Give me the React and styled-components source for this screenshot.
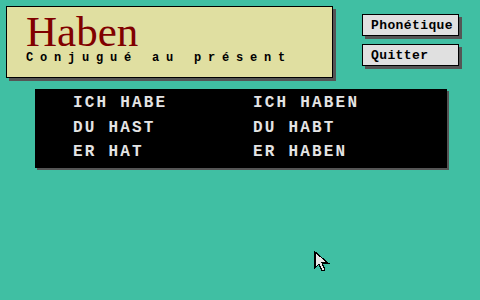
import React from 'react';
import styled, { createGlobalStyle } from 'styled-components';

const teal = '#40bfa3';
const shadow = '#555555';

const Global = createGlobalStyle`
  html, body {
    margin: 0;
    padding: 0;
    background: ${teal};
  }
  body {
    width: 480px;
    height: 300px;
    overflow: hidden;
  }
`;

const Screen = styled.div`
  position: relative;
  width: 480px;
  height: 300px;
  padding: 6px 0 0 6px;
  box-sizing: border-box;
`;

const TopRow = styled.div`
  display: flex;
  align-items: flex-start;
`;

const TitleCard = styled.div`
  width: 327px;
  height: 72px;
  background: #e0dfa1;
  border: 1px solid #000;
  box-shadow: 3px 3px 0 ${shadow};
  padding: 0 0 0 19px;
  box-sizing: border-box;
  display: flex;
  flex-direction: column;
`;

const Title = styled.div`
  font-family: "Liberation Serif", serif;
  font-size: 43px;
  line-height: 38px;
  height: 38px;
  color: #800000;
  margin-top: 6px;
`;

const Subtitle = styled.div`
  font-family: "Liberation Mono", monospace;
  font-weight: bold;
  font-size: 12px;
  letter-spacing: 6.8px;
  color: #000;
`;

const Buttons = styled.div`
  display: flex;
  flex-direction: column;
  gap: 8px;
  margin: 8px 0 0 29px;
`;

const Button = styled.button`
  width: 97px;
  height: 22px;
  background: #e0e0e0;
  border: 1px solid #000;
  box-shadow: 3px 3px 0 ${shadow};
  font-family: "Liberation Mono", monospace;
  font-weight: bold;
  font-size: 13px;
  letter-spacing: 0.4px;
  color: #000;
  text-align: left;
  padding: 0 0 0 8px;
  margin: 0;
`;

const Panel = styled.div`
  margin: 11px 0 0 29px;
  width: 412px;
  height: 79px;
  background: #000;
  box-shadow: 2px 2px 0 ${shadow};
  display: grid;
  grid-template-columns: 180px 1fr;
  grid-auto-rows: 24.5px;
  padding: 2px 0 0 38px;
  box-sizing: border-box;
`;

const Cell = styled.div`
  font-family: "Liberation Mono", monospace;
  font-weight: bold;
  font-size: 16px;
  letter-spacing: 2.2px;
  color: #e4e4e4;
  line-height: 24px;
`;

const Cursor = styled.svg`
  position: absolute;
  left: 314px;
  top: 251px;
`;

const rows = [
  ['ICH HABE', 'ICH HABEN'],
  ['DU HAST', 'DU HABT'],
  ['ER HAT', 'ER HABEN'],
];

export default function App() {
  return (
    <Screen>
      <Global />
      <TopRow>
        <TitleCard>
          <Title>Haben</Title>
          <Subtitle>Conjugué au présent</Subtitle>
        </TitleCard>
        <Buttons>
          <Button>Phonétique</Button>
          <Button>Quitter</Button>
        </Buttons>
      </TopRow>
      <Panel>
        {rows.map(([a, b]) => (
          <React.Fragment key={a}>
            <Cell>{a}</Cell>
            <Cell>{b}</Cell>
          </React.Fragment>
        ))}
      </Panel>
      <Cursor width="18" height="24" viewBox="0 0 18 24" shapeRendering="crispEdges">
        <path d="M1 1 L1 17 L5 13 L8 20 L11 19 L8 12 L14 12 Z" fill="#e8e8e8" stroke="#000" strokeWidth="1.2" />
      </Cursor>
    </Screen>
  );
}
